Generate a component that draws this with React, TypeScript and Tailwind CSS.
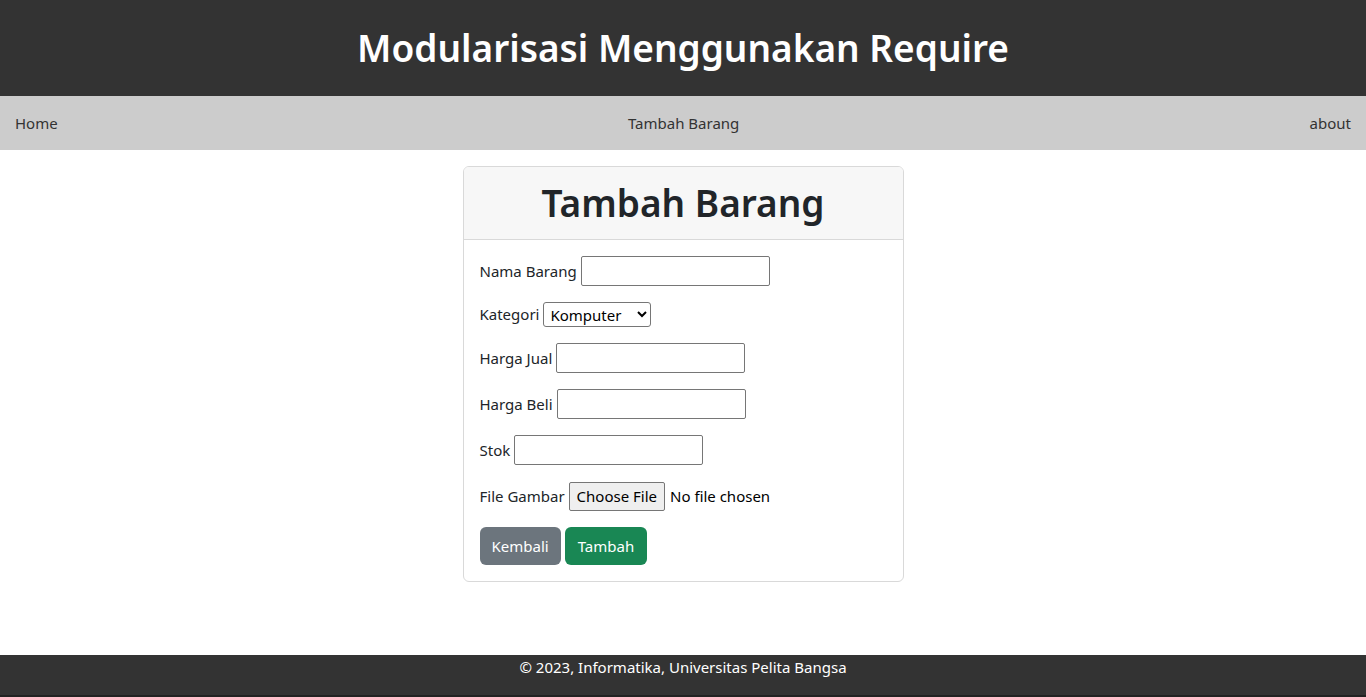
export default function App() {
  const font = { fontFamily: '"Noto Sans", "Open Sans", sans-serif' };
  return (
    <div className="min-h-screen flex flex-col bg-white text-[#212529] text-[15px]" style={font}>
      <header className="bg-[#333333] h-[96px] flex items-center justify-center">
        <h1 className="text-white text-[37px] font-semibold leading-[48px]">Modularisasi Menggunakan Require</h1>
      </header>

      <nav className="bg-[#cccccc] h-[54px] flex items-center justify-between px-[15px] text-[#333333]">
        <a href="#">Home</a>
        <a href="#">Tambah Barang</a>
        <a href="#">about</a>
      </nav>

      <main className="flex-1 flex justify-center pt-[16px]">
        <div className="w-[441px] h-fit border border-[#d9d9d9] rounded-[6px] overflow-hidden">
          <div className="bg-[#f7f7f7] border-b border-[#d9d9d9] h-[73px] flex items-center justify-center">
            <h2 className="text-[37px] font-semibold leading-[48px] text-[#212529]">Tambah Barang</h2>
          </div>
          <form className="p-[16px] flex flex-col gap-[16px]" onSubmit={(e) => e.preventDefault()}>
            <div className="flex items-center gap-[4px]">
              <label>Nama Barang</label>
              <input className="w-[189px] h-[30px] border border-[#767676] rounded-[2px]" />
            </div>
            <div className="flex items-center gap-[4px]">
              <label>Kategori</label>
              <select className="w-[108px] h-[25px] border border-[#767676] rounded-[3px] text-[15px] text-black pl-[2px]">
                <option>Komputer</option>
                <option>Elektronik</option>
              </select>
            </div>
            <div className="flex items-center gap-[4px]">
              <label>Harga Jual</label>
              <input className="w-[189px] h-[30px] border border-[#767676] rounded-[2px]" />
            </div>
            <div className="flex items-center gap-[4px]">
              <label>Harga Beli</label>
              <input className="w-[189px] h-[30px] border border-[#767676] rounded-[2px]" />
            </div>
            <div className="flex items-center gap-[4px]">
              <label>Stok</label>
              <input className="w-[189px] h-[30px] border border-[#767676] rounded-[2px]" />
            </div>
            <div className="flex items-end gap-[4px] h-[30px]">
              <label className="leading-[29px]">File Gambar</label>
              <span className="h-[29px] px-[7px] flex items-center bg-[#efefef] border border-[#767676] rounded-[2px] text-black">Choose File</span>
              <span className="text-black ml-[1px] leading-[29px]">No file chosen</span>
            </div>
            <div className="flex gap-[4px]">
              <button type="button" className="h-[38px] px-[12px] rounded-[6px] bg-[#6c757d] text-white">Kembali</button>
              <button type="submit" className="h-[38px] px-[13px] rounded-[6px] bg-[#198754] text-white">Tambah</button>
            </div>
          </form>
        </div>
      </main>

      <footer className="bg-[#333333] h-[42px] flex flex-col">
        <p className="text-white text-center leading-[24px]">© 2023, Informatika, Universitas Pelita Bangsa</p>
        <div className="flex-1" />
        <div className="h-[2px] bg-[#222222]" />
      </footer>
    </div>
  );
}
